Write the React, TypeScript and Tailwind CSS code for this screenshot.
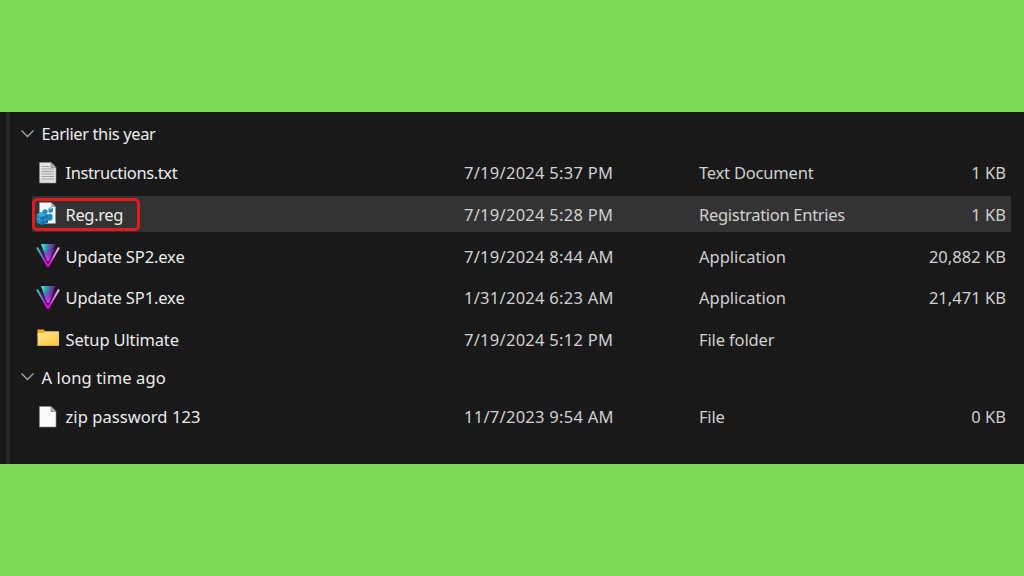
import type { ReactNode } from "react"
import clsx from "clsx"

type FileEntry = {
  name: string
  date: string
  type: string
  size: string
  icon: ReactNode
  spacing: string
  typeSpacing?: string
  selected?: boolean
}

type Group = {
  title: string
  spacing: string
  files: FileEntry[]
}

const PageIcon = ({ lines = false }: { lines?: boolean }) => (
  <svg width="24" height="24" viewBox="0 0 24 24">
    <path d="M3.500 1.500H15l5 5V22H3.500z" fill={lines ? "#e2e2e2" : "#fafafa"} stroke="#8d8d8d" strokeWidth="0.6" />
    <path d="M15 1.500v5h5z" fill="#b5b5b5" stroke="#777" strokeWidth="0.6" />
    {lines && (
      <path d="M5.500 5.500h8M5.500 8h12.500M5.500 10.500h12.500M5.500 13h12.500M5.500 15.500h12.500M5.500 18h12.500" stroke="#9a9a9a" strokeWidth="0.9" />
    )}
  </svg>
)

const RegIcon = () => (
  <svg width="24" height="24" viewBox="0 0 24 24">
    <path d="M3.500 0.500H15l4.500 4.500V21.500H3.500z" fill="#f5f5f5" stroke="#999" strokeWidth="0.5" />
    <path d="M15 0.500V5h4.500z" fill="#b0b0b0" />
    {/* large cube */}
    <path d="M0.500 12.500 6 10l6 2.500v8L6 23l-5.500-2.500z" fill="#1580b8" />
    <path d="M0.500 12.500 6 10l6 2.500L6 15z" fill="#3ba9d9" />
    <path d="M6 15v8l6-2.500v-8z" fill="#0d6aa3" />
    {/* small cubes */}
    <path d="m11.500 13 2.500-1.500 2.500 1.500v4.500L13.500 19l-2-1z" fill="#1a87c0" />
    <path d="m12.500 6.500 2-1.300 2.500 1.300v3L14.500 11l-2-1.300zM6.500 8.500 9 7l2.500 1.500V11L9 12.500 6.500 11z" fill="#1d8cc5" />
    <path d="m12.500 6.500 2-1.300 2.500 1.300-2.500 1.300z" fill="#62c8ee" />
    <path d="M0.500 16.500 6 19l6-2.500M3.200 13.500v8M9 14v8" fill="none" stroke="#5fbde6" strokeWidth="0.5" />
  </svg>
)

const VegasIcon = () => (
  <svg width="24" height="26" viewBox="0 0 24 26">
    <defs>
      <linearGradient id="fill" x1="0" y1="0" x2="1" y2="0.3">
        <stop offset="0" stopColor="#52efe4" />
        <stop offset="0.45" stopColor="#2894a8" />
        <stop offset="0.75" stopColor="#7030a4" />
        <stop offset="1" stopColor="#4a1573" />
      </linearGradient>
      <linearGradient id="glow" x1="0" y1="0" x2="0" y2="1">
        <stop offset="0.3" stopColor="#a020d8" stopOpacity="0" />
        <stop offset="0.8" stopColor="#b93be6" />
      </linearGradient>
      <linearGradient id="left" x1="0" y1="0" x2="0" y2="1">
        <stop offset="0" stopColor="#20d8cc" />
        <stop offset="0.5" stopColor="#7565c0" />
        <stop offset="0.75" stopColor="#f000e8" />
      </linearGradient>
      <linearGradient id="right" x1="0" y1="0" x2="0" y2="1">
        <stop offset="0" stopColor="#e9c8ee" />
        <stop offset="0.5" stopColor="#df70dc" />
        <stop offset="0.8" stopColor="#ff00f0" />
      </linearGradient>
    </defs>
    <path d="M3 6 12 22 21 6z" fill="#6b1a82" opacity="0.45" />
    <path d="M5 1h14.500l-6.500 17h-2z" fill="url(#fill)" />
    <path d="M5 1h14.500l-6.500 17h-2z" fill="url(#glow)" />
    <path d="M1 4.500 12 23.500" stroke="url(#left)" strokeWidth="1.900" />
    <path d="M23 4.500 12 23.500" stroke="url(#right)" strokeWidth="1.900" />
  </svg>
)

const FolderIcon = () => (
  <svg width="24" height="24" viewBox="0 0 24 24">
    <defs>
      <linearGradient id="folder" x1="0" y1="0" x2="1" y2="1">
        <stop offset="0" stopColor="#ffe495" />
        <stop offset="1" stopColor="#fbc63a" />
      </linearGradient>
    </defs>
    <path d="M1.500 2.500h6l2 2H22.500v4h-21z" fill="#f5ad14" />
    <path d="M1.500 6H8l1.500-1.500h13.500V19h-21.500z" fill="url(#folder)" />
    <path d="M1.500 18.500h21.500" stroke="#e3a72b" />
  </svg>
)

const groups: Group[] = [
  {
    title: "Earlier this year",
    spacing: "tracking-[-0.39px]",
    files: [
      { name: "Instructions.txt", date: "7/19/2024 5:37 PM", type: "Text Document", size: "1 KB", icon: <PageIcon lines />, spacing: "tracking-[-0.39px]" },
      { name: "Reg.reg", date: "7/19/2024 5:28 PM", type: "Registration Entries", size: "1 KB", icon: <RegIcon />, spacing: "tracking-[-0.35px]", typeSpacing: "tracking-[-0.3px]", selected: true },
      { name: "Update SP2.exe", date: "7/19/2024 8:44 AM", type: "Application", size: "20,882 KB", icon: <VegasIcon />, spacing: "tracking-[-0.12px]", typeSpacing: "tracking-[0px]" },
      { name: "Update SP1.exe", date: "1/31/2024 6:23 AM", type: "Application", size: "21,471 KB", icon: <VegasIcon />, spacing: "tracking-[-0.12px]", typeSpacing: "tracking-[0px]" },
      { name: "Setup Ultimate", date: "7/19/2024 5:12 PM", type: "File folder", size: "", icon: <FolderIcon />, spacing: "tracking-[-0.15px]", typeSpacing: "tracking-[-0.13px]" },
    ],
  },
  {
    title: "A long time ago",
    spacing: "tracking-[0.14px]",
    files: [
      { name: "zip password 123", date: "11/7/2023 9:54 AM", type: "File", size: "0 KB", icon: <PageIcon />, spacing: "tracking-[0.07px]" },
    ],
  },
]

function FileRow({ file }: { file: FileEntry }) {
  return (
    <div className="flex h-[41.6px] items-center">
      <div
        className={clsx(
          "relative -mt-px flex h-[36px] w-full items-center text-[#d0d0d0]",
          file.selected && "bg-[#333333]"
        )}
      >
        <div className="flex w-[432px] items-center pl-1">
          <span className="flex w-[29.500px] shrink-0">{file.icon}</span>
          <span className={clsx("pt-[2px] text-[#ececec]", file.spacing)}>{file.name}</span>
        </div>
        <span className="w-[235px] pt-[2px] tracking-[0.27px]">{file.date}</span>
        <span className={clsx("w-[180px] pt-[2px]", file.typeSpacing)}>{file.type}</span>
        <span className="grow pt-[2px] pr-[5px] text-right tracking-[0.03px]">{file.size}</span>
        {file.selected && (
          <div className="absolute top-[2px] left-0 h-[33px] w-[107.500px] rounded-[5px] border-[3px] border-[#e3191f]" />
        )}
      </div>
    </div>
  )
}

export default function App() {
  return (
    <div className="flex h-screen flex-col justify-center overflow-hidden bg-[#7ed957]">
      <div className="flex h-[352px] bg-[#191919] font-['Noto_Sans','Open_Sans',sans-serif] text-[16.5px] tracking-[-0.2px] whitespace-nowrap">
        <div className="ml-1.5 w-1 shrink-0 bg-[#272727]" />
        <div className="grow pt-[4.5px] pr-[13px]">
          {groups.map((group) => (
            <section key={group.title}>
              <div className={clsx("flex h-9 items-center pl-[11px] text-[#ececec]", group.spacing)}>
                <svg width="14" height="10" viewBox="0 0 14 10" className="mr-[6.5px] mb-0.5">
                  <path d="m0.500 1.500 6 6 6-6" fill="none" stroke="#a6a6a6" strokeWidth="1.300" />
                </svg>
                {group.title}
              </div>
              <div className="pl-[22px]">
                {group.files.map((file) => (
                  <FileRow key={file.name} file={file} />
                ))}
              </div>
            </section>
          ))}
        </div>
      </div>
    </div>
  )
}
